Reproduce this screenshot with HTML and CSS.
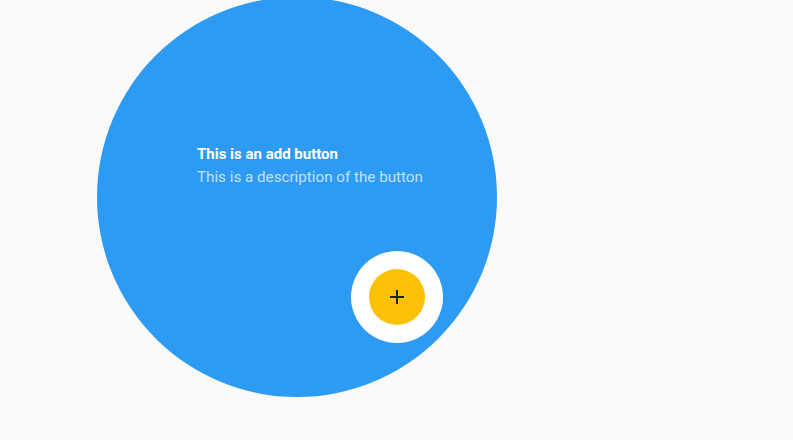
FILE: index.html
```html
<!DOCTYPE html>
<html>
<head>
<meta charset="utf-8">
<link rel="stylesheet" href="styles.css">
</head>
<body>
<div class="stage">
  <div class="backdrop">
    <div class="copy">
      <div class="title">This is an add button</div>
      <div class="desc">This is a description of the button</div>
    </div>
  </div>
  <div class="halo">
    <button class="fab" aria-label="Add">
      <svg width="24" height="24" viewBox="0 0 24 24"><path d="M19 13h-6v6h-2v-6H5v-2h6V5h2v6h6v2z" fill="#212121"/></svg>
    </button>
  </div>
</div>
</body>
</html>
```
FILE: styles.css
```css
html, body { margin: 0; padding: 0; }
body {
  background: #fafafa;
  font-family: Roboto, "Noto Sans", sans-serif;
  width: 793px;
  height: 440px;
  overflow: hidden;
}
.stage { position: relative; width: 793px; height: 440px; }
.backdrop {
  position: absolute;
  left: 97px;
  top: -3px;
  width: 400px;
  height: 400px;
  border-radius: 50%;
  background: #2d9bf3;
}
.copy {
  position: absolute;
  left: 100px;
  top: 147px;
  display: flex;
  flex-direction: column;
  gap: 3px;
}
.title {
  color: #ffffff;
  font-size: 15px;
  font-weight: 700;
  line-height: 20px;
}
.desc {
  color: rgba(255,255,255,0.72);
  font-size: 15.2px;
  line-height: 20px;
}
.halo {
  position: absolute;
  left: 351px;
  top: 251px;
  width: 92px;
  height: 92px;
  border-radius: 50%;
  background: #ffffff;
  display: flex;
  align-items: center;
  justify-content: center;
}
.fab {
  width: 56px;
  height: 56px;
  border-radius: 50%;
  border: 0;
  padding: 0;
  background: #ffc107;
  display: flex;
  align-items: center;
  justify-content: center;
}
.fab svg { display: block; }
```
